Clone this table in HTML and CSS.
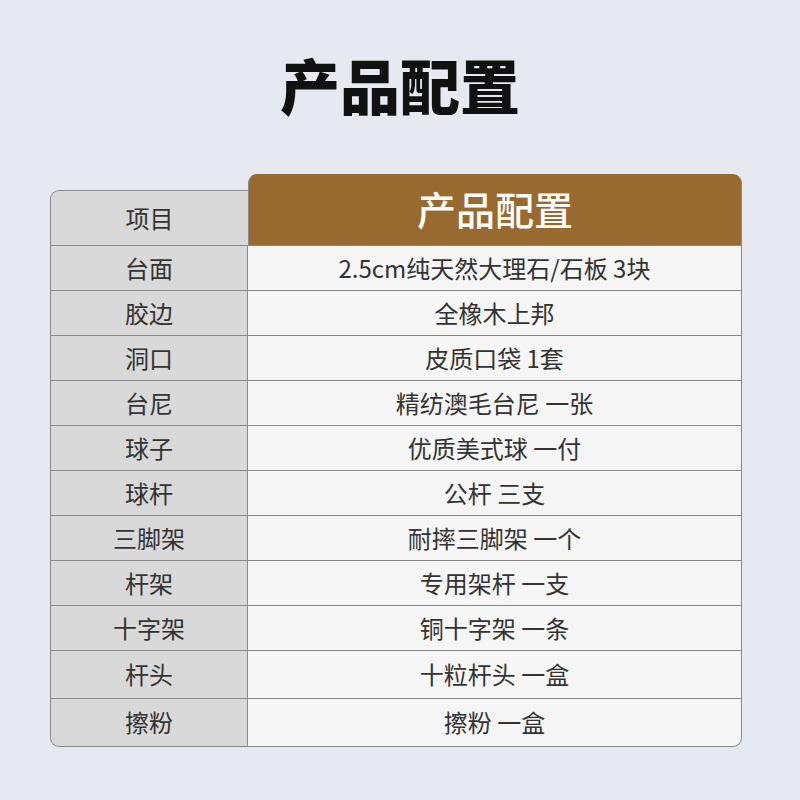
FILE: index.html
```html
<!DOCTYPE html>
<html lang="zh-CN">
<head>
<meta charset="utf-8">
<title>产品配置</title>
<link rel="stylesheet" href="styles.css">
</head>
<body>
<h1 class="title">产品配置</h1>
<div class="table">
  <div class="head">
    <div class="hcell-left">项目</div>
    <div class="hcell-right">产品配置</div>
  </div>
  <div class="row"><div class="c-left">台面</div><div class="c-right">2.5cm纯天然大理石/石板 3块</div></div>
  <div class="row"><div class="c-left">胶边</div><div class="c-right">全橡木上邦</div></div>
  <div class="row"><div class="c-left">洞口</div><div class="c-right">皮质口袋 1套</div></div>
  <div class="row"><div class="c-left">台尼</div><div class="c-right">精纺澳毛台尼 一张</div></div>
  <div class="row"><div class="c-left">球子</div><div class="c-right">优质美式球 一付</div></div>
  <div class="row"><div class="c-left">球杆</div><div class="c-right">公杆 三支</div></div>
  <div class="row"><div class="c-left">三脚架</div><div class="c-right">耐摔三脚架 一个</div></div>
  <div class="row"><div class="c-left">杆架</div><div class="c-right">专用架杆 一支</div></div>
  <div class="row"><div class="c-left">十字架</div><div class="c-right">铜十字架 一条</div></div>
  <div class="row tall"><div class="c-left">杆头</div><div class="c-right">十粒杆头 一盒</div></div>
  <div class="row tall last"><div class="c-left">擦粉</div><div class="c-right">擦粉 一盒</div></div>
</div>
</body>
</html>
```
FILE: styles.css
```css
* { box-sizing: border-box; }
html, body { margin: 0; padding: 0; }
body {
  width: 800px;
  height: 800px;
  background: #e6e9f0;
  font-family: "Noto Sans CJK SC", "Noto Sans", sans-serif;
  color: #333;
  overflow: hidden;
}
.title {
  margin: 0;
  padding-top: 54px;
  height: 174px;
  text-align: center;
  font-size: 60px;
  line-height: 60px;
  font-weight: 900;
  color: #111;
  letter-spacing: 0;
}
.table {
  width: 692px;
  margin-left: 50px;
}
.head {
  display: flex;
  align-items: flex-end;
}
.hcell-left {
  width: 198px;
  height: 56px;
  background: #d9d9d9;
  border: 1px solid #8a8a8a;
  border-right: none;
  border-top-left-radius: 9px;
  display: flex;
  align-items: center;
  justify-content: center;
  font-size: 24px;
  padding-bottom: 2px;
}
.hcell-right {
  flex: 1;
  height: 72px;
  background: #996a30;
  border: 1px solid #8a8a8a;
  border-top-color: #996a30;
  border-radius: 9px 9px 0 0;
  display: flex;
  align-items: center;
  justify-content: center;
  color: #fff;
  font-size: 39px;
  font-weight: 500;
  padding-bottom: 5px;
}
.row {
  display: flex;
  height: 45px;
}
.row.tall { height: 48px; }
.c-left, .c-right {
  display: flex;
  align-items: center;
  justify-content: center;
  font-size: 24px;
  padding-bottom: 2px;
  border-bottom: 1px solid #8a8a8a;
}
.c-left {
  width: 198px;
  background: #d9d9d9;
  border-left: 1px solid #8a8a8a;
  border-right: 1px solid #8a8a8a;
}
.c-right {
  flex: 1;
  background: #f6f6f6;
  border-right: 1px solid #8a8a8a;
}
.row.last .c-left { border-bottom-left-radius: 9px; }
.row.last .c-right { border-bottom-right-radius: 9px; }
```
